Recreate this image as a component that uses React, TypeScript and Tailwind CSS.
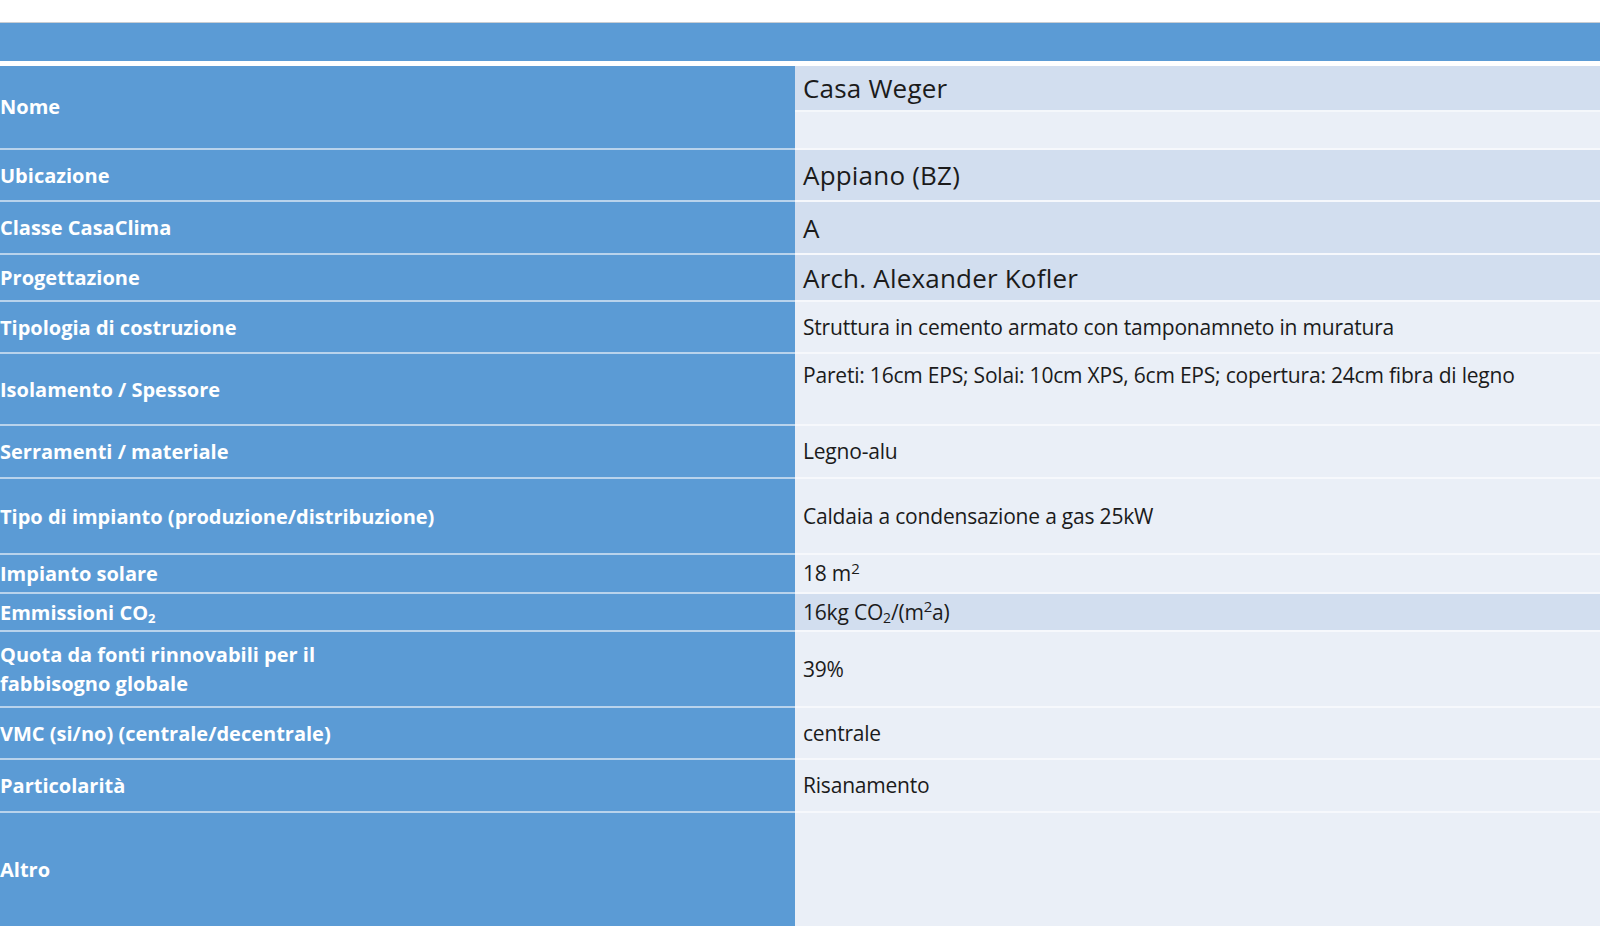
import React from 'react';

type Row = {
  label: React.ReactNode;
  value?: React.ReactNode;
  h: string;
  big?: boolean;
  dark?: boolean;
  top?: boolean;
};

const rows: Row[] = [
  { label: 'Ubicazione', value: 'Appiano (BZ)', h: 'h-[52px]', big: true, dark: true },
  { label: 'Classe CasaClima', value: 'A', h: 'h-[53px]', big: true, dark: true },
  { label: 'Progettazione', value: 'Arch. Alexander Kofler', h: 'h-[47px]', big: true, dark: true },
  { label: 'Tipologia di costruzione', value: 'Struttura in cemento armato con tamponamneto in muratura', h: 'h-[52px]' },
  {
    label: 'Isolamento / Spessore',
    value: 'Pareti: 16cm EPS; Solai: 10cm XPS, 6cm EPS; copertura: 24cm fibra di legno',
    h: 'h-[72px]',
    top: true,
  },
  { label: 'Serramenti / materiale', value: 'Legno-alu', h: 'h-[53px]' },
  { label: 'Tipo di impianto (produzione/distribuzione)', value: 'Caldaia a condensazione a gas 25kW', h: 'h-[76px]' },
  {
    label: 'Impianto solare',
    value: (
      <>
        18 m<sup className="text-[15px]">2</sup>
      </>
    ),
    h: 'h-[39px]',
  },
  {
    label: (
      <>
        Emmissioni CO<sub className="text-[13px]">2</sub>
      </>
    ),
    value: (
      <>
        16kg CO<sub className="text-[14px]">2</sub>/(m<sup className="text-[15px]">2</sup>a)
      </>
    ),
    h: 'h-[38px]',
    dark: true,
  },
  {
    label: (
      <>
        Quota da fonti rinnovabili per il
        <br />
        fabbisogno globale
      </>
    ),
    value: '39%',
    h: 'h-[76px]',
  },
  { label: 'VMC (si/no) (centrale/decentrale)', value: 'centrale', h: 'h-[52px]' },
  { label: 'Particolarità', value: 'Risanamento', h: 'h-[53px]' },
  { label: 'Altro', h: 'h-[115px]' },
];

const App = () => {
  return (
    <div className="w-[1600px] h-[940px] bg-white overflow-hidden" style={{ fontFamily: '"Open Sans", "Liberation Sans", sans-serif' }}>
      <div className="h-[22px]" />
      <div className="h-[39px] bg-[#5b9bd5] border-t border-[#c8cdd3]" />
      <div className="h-[5px]" />

      {/* Nome row: right side split in two bands */}
      <div className="flex h-[82px]">
        <div className="w-[795px] bg-[#5b9bd5] flex items-center text-white font-bold text-[20px]">
          Nome
        </div>
        <div className="flex-1 flex flex-col">
          <div className="h-[44px] bg-[#d2deef] flex items-center pl-2 text-[26px] tracking-[0.2px] text-[#1b1b1b]">
            Casa Weger
          </div>
          <div className="flex-1 bg-[#eaeff7] border-t-2 border-[#f4f7fb]" />
        </div>
      </div>

      {rows.map((row, i) => (
        <div key={i} className={`flex ${row.h}`}>
          <div className="w-[795px] bg-[#5b9bd5] border-t-2 border-[#b9d3ec] flex items-center text-white font-bold text-[20px] leading-[29px]">
            <div>{row.label}</div>
          </div>
          <div
            className={`flex-1 border-t-2 border-[#f6f8fc] flex pl-2 text-[#1b1b1b] ${
              row.dark ? 'bg-[#d2deef]' : 'bg-[#eaeff7]'
            } ${row.top ? 'items-start pt-[11px]' : 'items-center'} ${
              row.big ? 'text-[26px] tracking-[0.2px]' : 'text-[21px] tracking-[-0.2px]'
            }`}
          >
            <div className="leading-none">{row.value}</div>
          </div>
        </div>
      ))}
    </div>
  );
};

export default App;
